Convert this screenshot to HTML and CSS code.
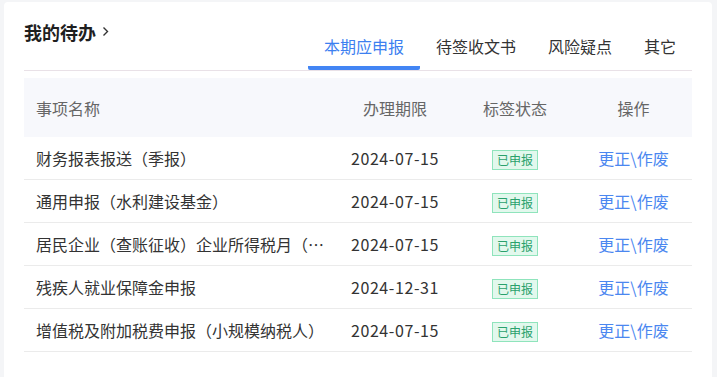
FILE: index.html
```html
<!DOCTYPE html>
<html lang="zh-CN">
<head>
    <meta charset="UTF-8">
    <meta name="viewport" content="width=device-width, initial-scale=1.0">
    <title>我的待办</title>
    <link rel="stylesheet" href="styles.css">
</head>
<body>

<div class="card">
    <!-- Header: title + tabs -->
    <div class="card-header">
        <div class="card-title">
            我的待办
            <svg class="chevron" width="7" height="11" viewBox="0 0 7 11">
                <polyline points="1.5,1.5 5.5,5.5 1.5,9.5" fill="none" stroke="#333" stroke-width="1.4"/>
            </svg>
        </div>
        <div class="tabs">
            <div class="tab active">本期应申报</div>
            <div class="tab">待签收文书</div>
            <div class="tab">风险疑点</div>
            <div class="tab">其它</div>
        </div>
    </div>

    <!-- Todo table -->
    <table class="todo-table">
        <colgroup>
            <col class="col-name">
            <col class="col-date">
            <col class="col-tag">
            <col class="col-op">
        </colgroup>
        <thead>
            <tr>
                <th class="name">事项名称</th>
                <th>办理期限</th>
                <th>标签状态</th>
                <th>操作</th>
            </tr>
        </thead>
        <tbody>
            <tr>
                <td class="name">财务报表报送（季报）</td>
                <td class="date">2024-07-15</td>
                <td><span class="tag">已申报</span></td>
                <td><a class="op-link" href="#">更正\作废</a></td>
            </tr>
            <tr>
                <td class="name">通用申报（水利建设基金）</td>
                <td class="date">2024-07-15</td>
                <td><span class="tag">已申报</span></td>
                <td><a class="op-link" href="#">更正\作废</a></td>
            </tr>
            <tr>
                <td class="name" title="居民企业（查账征收）企业所得税月（季）度预缴纳税申报">居民企业（查账征收）企业所得税月（…</td>
                <td class="date">2024-07-15</td>
                <td><span class="tag">已申报</span></td>
                <td><a class="op-link" href="#">更正\作废</a></td>
            </tr>
            <tr>
                <td class="name">残疾人就业保障金申报</td>
                <td class="date">2024-12-31</td>
                <td><span class="tag">已申报</span></td>
                <td><a class="op-link" href="#">更正\作废</a></td>
            </tr>
            <tr>
                <td class="name">增值税及附加税费申报（小规模纳税人）</td>
                <td class="date">2024-07-15</td>
                <td><span class="tag">已申报</span></td>
                <td><a class="op-link" href="#">更正\作废</a></td>
            </tr>
        </tbody>
    </table>
</div>

</body>
</html>
```

FILE: styles.css
```css
/* Page */
body {
    margin: 0;
    background-color: #f4f5f7;
    font-family: "Noto Sans CJK SC", "Noto Sans", sans-serif;
    color: #333333;
}

/* Card */
.card {
    margin: 2px 5px 0 4px;
    background-color: #ffffff;
    border-radius: 4px 4px 0 0;
    padding: 20px 20px 40px 20px;
}

/* Header with title and tabs */
.card-header {
    display: flex;
    justify-content: space-between;
    align-items: flex-start;
    border-bottom: 1px solid #e9e1e7;
}

.card-title {
    display: flex;
    align-items: center;
    gap: 6px;
    font-size: 18px;
    font-weight: bold;
    line-height: 20px;
    color: #1f1f1f;
}

.chevron {
    margin-top: -2px;
}

/* Tabs */
.tabs {
    display: flex;
    margin-top: 12px;
}

.tab {
    padding: 0 16px 8px 16px;
    font-size: 16px;
    line-height: 24px;
    color: #333333;
    border-bottom: 4px solid transparent;
    cursor: pointer;
}

.tab.active {
    color: #3d7ff0;
    border-bottom-color: #4285f4;
    border-radius: 2px;
}

/* Table */
.todo-table {
    width: 100%;
    margin-top: 7px;
    border-collapse: collapse;
    table-layout: fixed;
    font-size: 16px;
}

.col-name { width: 311px; }
.col-date { width: 120px; }
.col-tag  { width: 120px; }
.col-op   { width: 117px; }

.todo-table th {
    height: 59px;
    padding: 0;
    background-color: #f7f8fc;
    font-weight: normal;
    color: #666666;
    text-align: center;
}

.todo-table td {
    height: 42px;
    padding: 0;
    text-align: center;
    border-bottom: 1px solid #ebebeb;
    white-space: nowrap;
}

.todo-table .name {
    padding: 0 8px 0 12px;
    text-align: left;
    overflow: hidden;
}

.date {
    color: #333333;
    letter-spacing: 0.6px;
}

/* Status tag */
.tag {
    display: inline-block;
    padding: 0 4px;
    font-size: 12px;
    line-height: 18px;
    color: #2aa16c;
    background-color: #e2f8ed;
    border: 1px solid #8fe4bc;
}

/* Operation link */
.op-link {
    color: #4b87f0;
    text-decoration: none;
}
```
